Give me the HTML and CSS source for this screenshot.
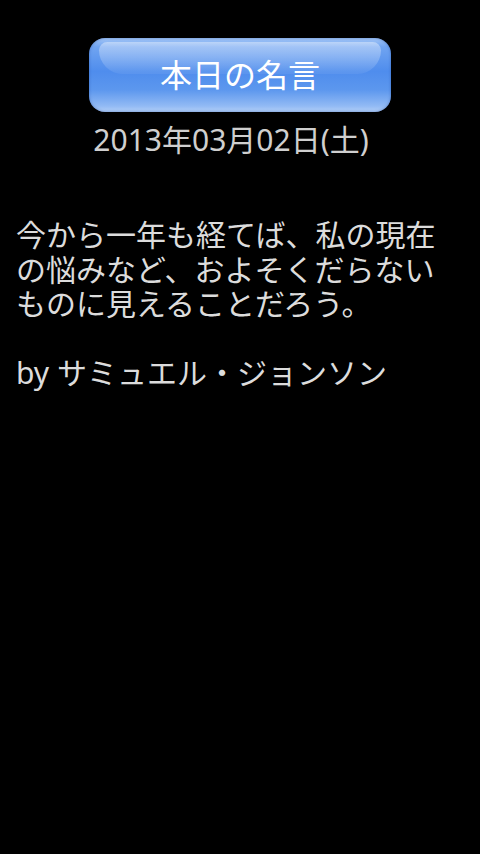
FILE: index.html
```html
<html>
<head>
<meta charset="UTF-8">
<title>本日の名言</title>
<link rel="stylesheet" href="styles.css">
</head>
<body>

<div class="screen">
    <div class="header">
        <div class="button">
            <span class="shine"></span>
            <span class="label">本日の名言</span>
        </div>
        <div class="date">2013年03月02日(土)</div>
    </div>

    <div class="quote">今から一年も経てば、私の現在の悩みなど、およそくだらないものに見えることだろう。</div>
    <div class="author">by サミュエル・ジョンソン</div>
</div>

</body>
</html>
```

FILE: styles.css
```css
body {
    margin: 0;
    background-color: #000;
    font-family: "Noto Sans", "Noto Sans CJK JP", sans-serif;
}

.screen {
    width: 480px;
    height: 854px;
    background-color: #000;
}

.header {
    display: flex;
    flex-direction: column;
    align-items: center;
    padding-top: 38px;
}

.button {
    position: relative;
    width: 302px;
    height: 74px;
    border-radius: 16px;
    background: linear-gradient(to bottom, #a6c8f7 0%, #70a4f1 12%, #4f8ded 45%, #5c97ee 70%, #92baf4 92%, #b4d0f7 100%);
    box-shadow: inset 0 0 3px rgba(40, 80, 160, 0.6);
    display: flex;
    align-items: center;
    justify-content: center;
    overflow: hidden;
}

.shine {
    position: absolute;
    left: 10px;
    right: 10px;
    top: 4px;
    height: 32px;
    border-radius: 14px 14px 40px 40px;
    background: linear-gradient(to bottom, rgba(255, 255, 255, 0.4), rgba(255, 255, 255, 0.06));
}

.label {
    position: relative;
    color: #fff;
    font-size: 32px;
    line-height: 40px;
}

.date {
    margin-top: 8px;
    margin-right: 18px;
    color: #cfcfcf;
    font-size: 30px;
    line-height: 40px;
}

.quote {
    width: 440px;
    margin-top: 58px;
    padding: 0 16px;
    color: #dcdcdc;
    font-size: 30px;
    line-height: 34.5px;
}

.author {
    margin-top: 34.5px;
    padding: 0 16px;
    color: #dcdcdc;
    font-size: 30px;
    line-height: 34.5px;
}
```
